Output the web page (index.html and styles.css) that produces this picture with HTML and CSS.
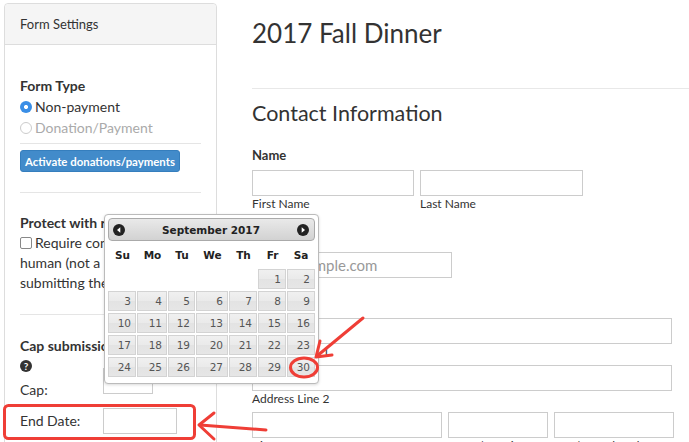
FILE: index.html
```html
<!DOCTYPE html>
<html>
<head>
<meta charset="utf-8">
<link rel="stylesheet" href="styles.css">
</head>
<body>
<div class="page">
  <aside class="panel">
    <div class="panel-head">Form Settings</div>
    <div class="panel-body">
      <div class="sec-title">Form Type</div>
      <div class="radio-row"><span class="radio checked"></span>Non-payment</div>
      <div class="radio-row muted"><span class="radio"></span>Donation/Payment</div>
      <div class="rule rule-a"></div>
      <button class="btn">Activate donations/payments</button>
      <div class="rule rule-b"></div>
      <div class="sec-title">Protect with reCAPTCHA</div>
      <div class="check-text"><span class="checkbox"></span>Require confirmation that user is<br>human (not a bot) before<br>submitting the form.</div>
      <div class="rule rule-c"></div>
      <div class="sec-title">Cap submissions</div>
      <div class="help-row"><span class="help">?</span></div>
      <div class="field-row cap-row"><span class="field-label">Cap:</span><span class="box cap-box"></span></div>
      <div class="field-row end-row"><span class="field-label">End Date:</span><span class="box end-box"></span></div>
    </div>
  </aside>

  <main class="main">
    <h1 class="title">2017 Fall Dinner</h1>
    <div class="hr"></div>
    <h2 class="subtitle">Contact Information</h2>
    <div class="label label-name">Name</div>
    <div class="inputs">
      <div class="col"><span class="box w162"></span><span class="sub">First Name</span></div>
      <div class="col"><span class="box w163"></span><span class="sub">Last Name</span></div>
    </div>
    <div class="label label-email">Email</div>
    <div class="box w200 ph">you@example.com</div>
    <div class="label label-addr">Address</div>
    <span class="box w420 block"></span>
    <span class="sub">Address Line 1</span>
    <span class="box w420 block gap5"></span>
    <span class="sub">Address Line 2</span>
    <div class="inputs gap5">
      <div class="col"><span class="box w190"></span><span class="sub">City</span></div>
      <div class="col"><span class="box w100"></span><span class="sub">State / Province</span></div>
      <div class="col"><span class="box w120"></span><span class="sub">ZIP / Postal Code</span></div>
    </div>
  </main>

  <div class="datepicker">
    <div class="dp-head">
      <svg class="dp-nav" width="12" height="12" viewBox="0 0 12 12"><circle cx="6" cy="6" r="6" fill="#222"/><path d="M7.3 3.3 L4 6 L7.3 8.7 Z" fill="#fff"/></svg>
      <span class="dp-title">September 2017</span>
      <svg class="dp-nav" width="12" height="12" viewBox="0 0 12 12"><circle cx="6" cy="6" r="6" fill="#222"/><path d="M4.7 3.3 L8 6 L4.7 8.7 Z" fill="#fff"/></svg>
    </div>
    <table class="dp-table">
      <colgroup><col class="c1"><col class="c2"><col class="c3"><col class="c4"><col class="c5"><col class="c6"><col class="c7"></colgroup>
      <thead><tr><th>Su</th><th>Mo</th><th>Tu</th><th>We</th><th>Th</th><th>Fr</th><th>Sa</th></tr></thead>
      <tbody>
        <tr><td></td><td></td><td></td><td></td><td></td><td><a>1</a></td><td><a>2</a></td></tr>
        <tr><td><a>3</a></td><td><a>4</a></td><td><a>5</a></td><td><a>6</a></td><td><a>7</a></td><td><a>8</a></td><td><a>9</a></td></tr>
        <tr><td><a>10</a></td><td><a>11</a></td><td><a>12</a></td><td><a>13</a></td><td><a>14</a></td><td><a>15</a></td><td><a>16</a></td></tr>
        <tr><td><a>17</a></td><td><a>18</a></td><td><a>19</a></td><td><a>20</a></td><td><a>21</a></td><td><a>22</a></td><td><a>23</a></td></tr>
        <tr><td><a>24</a></td><td><a>25</a></td><td><a>26</a></td><td><a>27</a></td><td><a>28</a></td><td><a>29</a></td><td><a>30</a></td></tr>
      </tbody>
    </table>
  </div>

  <svg class="annot" width="689" height="442" viewBox="0 0 689 442">
    <g fill="none" stroke="#ef3e36" stroke-width="3" stroke-linecap="round" stroke-linejoin="round">
      <rect x="4.5" y="405.5" width="190" height="33" rx="4"/>
      <path d="M266 430 L200 425"/>
      <path d="M214 413 L199 425 L214 439"/>
      <path d="M363 318 L317 356"/>
      <path d="M320 341 L316 357 L332 355"/>
      <ellipse cx="304" cy="367.5" rx="13.5" ry="9.5"/>
    </g>
  </svg>
</div>
</body>
</html>
```
FILE: styles.css
```css
* { box-sizing: border-box; }
html, body { margin: 0; padding: 0; background: #fff; }
body { font-family: Lato, "Open Sans", Arial, sans-serif; color: #333; }

.page {
  position: relative;
  width: 689px;
  height: 442px;
  overflow: hidden;
  display: flex;
  align-items: flex-start;
  padding: 3px 0 0 4px;
}

/* left panel */
.panel {
  width: 213px;
  min-height: 470px;
  flex: none;
  border: 1px solid #ddd;
  border-radius: 4px 4px 0 0;
}
.panel-head {
  height: 41px;
  line-height: 40px;
  padding: 0 15px;
  font-size: 13px;
  background: #f5f5f5;
  border-bottom: 1px solid #ddd;
  border-radius: 4px 4px 0 0;
}
.panel-body {
  padding: 31px 15px 0 15px;
  font-size: 14px;
}
.sec-title { font-weight: 700; line-height: 20px; font-size: 14px; white-space: nowrap; }
.radio-row { line-height: 21px; display: flex; align-items: center; white-space: nowrap; }
.radio-row.muted { color: #aaa; }
.radio {
  width: 12px; height: 12px; border-radius: 50%;
  border: 1px solid #ccc; background: #fff; margin-right: 3px; flex: none;
}
.radio.checked {
  border: none;
  background: radial-gradient(circle, #fff 0 1.8px, #3a8ee6 2.3px);
}
.rule { border-top: 1px solid #e5e5e5; }
.rule-a { margin-top: 5px; }
.btn {
  display: block;
  margin-top: 6px;
  width: 160px; height: 22px;
  padding: 0;
  font-family: inherit;
  font-size: 11.4px; font-weight: 700;
  color: #fff;
  background: #428bca;
  border: 1px solid #357ebd;
  border-radius: 3px;
}
.rule-b { margin-top: 20px; margin-bottom: 20px; }
.check-text { line-height: 20px; white-space: nowrap; }
.checkbox {
  display: inline-block; width: 12px; height: 12px;
  border: 1px solid #888; border-radius: 2px; background: #fff;
  vertical-align: -1px; margin-right: 3px;
}
.rule-c { margin-top: 21px; margin-bottom: 21px; }
.help-row { height: 20px; display: flex; align-items: center; }
.help {
  width: 12px; height: 12px; border-radius: 50%;
  background: #333; color: #fff;
  font-size: 10px; font-weight: 700; line-height: 12px; text-align: center;
}
.field-row { display: flex; align-items: center; }
.field-label { width: 83px; flex: none; line-height: 20px; }
.cap-row { margin-top: 4px; align-items: flex-start; }
.cap-box { width: 50px; margin-top: -12px; }
.end-row { margin-top: 8px; }
.end-box { width: 74px; }

.box {
  display: inline-block;
  height: 26px;
  border: 1px solid #ccc;
  background: #fff;
}

/* main */
.main {
  flex: 1;
  margin-left: 35px;
  min-width: 0;
}
.title {
  margin: 15px 0 0;
  font-size: 26px; line-height: 30px; font-weight: 400;
  color: #333;
}
.hr { margin-top: 40px; border-top: 1px solid #e8e8e8; margin-right: -10px; }
.subtitle {
  margin: 11px 0 0;
  font-size: 21.5px; line-height: 26px; font-weight: 400;
}
.label { font-size: 13px; font-weight: 700; line-height: 16px; }
.label-name { margin-top: 21px; margin-bottom: 7px; }
.label-email { margin-top: 14px; margin-bottom: 10px; }
.label-addr { margin-top: 14px; margin-bottom: 10px; }
.inputs { display: flex; gap: 6px; }
.col { display: flex; flex-direction: column; }
.sub { display: block; font-size: 12px; line-height: 16px; white-space: nowrap; }
.block { display: block; }
.gap5 { margin-top: 5px; }
.w162 { width: 162px; }
.w163 { width: 163px; }
.w200 { width: 200px; }
.w420 { width: 420px; }
.w190 { width: 190px; }
.w100 { width: 100px; }
.w120 { width: 120px; }
.ph { display: block; color: #999; font-size: 15px; line-height: 24px; padding-left: 1px; }

/* datepicker */
.datepicker {
  position: absolute;
  left: 104px; top: 214px;
  width: 215px;
  padding: 3px 3px 0;
  background: #fff;
  border: 1px solid #bbb;
  border-radius: 4px;
  box-shadow: 0 1px 3px rgba(0,0,0,0.15);
  font-family: "DejaVu Sans", Verdana, sans-serif;
}
.dp-head {
  height: 23px;
  display: flex; align-items: center; justify-content: space-between;
  padding: 0 5px 0 4px;
  border: 1px solid #aaa;
  border-radius: 4px;
  background: linear-gradient(#e9e9e9, #d2d2d2);
}
.dp-nav { display: block; flex: none; }
.dp-title { font-size: 10.5px; font-weight: 700; color: #222; }
.dp-table {
  width: 207px;
  table-layout: fixed;
  border-collapse: separate;
  border-spacing: 0;
  margin-bottom: 5px;
}
.c1 { width: 29px; } .c2 { width: 31px; } .c3 { width: 28px; } .c4 { width: 33px; }
.c5 { width: 29px; } .c6 { width: 29px; } .c7 { width: 28px; }
.dp-table th {
  height: 27px; padding: 0;
  font-size: 10.5px; font-weight: 700; color: #222; text-align: center;
}
.dp-table td { padding: 1px 1px 1px 0; height: 22px; }
.dp-table td:last-child { padding-right: 0; }
.dp-table a {
  display: block;
  height: 20px;
  line-height: 18px;
  text-align: right;
  padding-right: 4px;
  font-size: 10.5px;
  color: #555;
  border: 1px solid #d3d3d3;
  background: linear-gradient(#f0f0f0 0, #eaeaea 50%, #e3e3e3 51%, #e6e6e6 100%);
}

.annot { position: absolute; left: 0; top: 0; pointer-events: none; }
```
